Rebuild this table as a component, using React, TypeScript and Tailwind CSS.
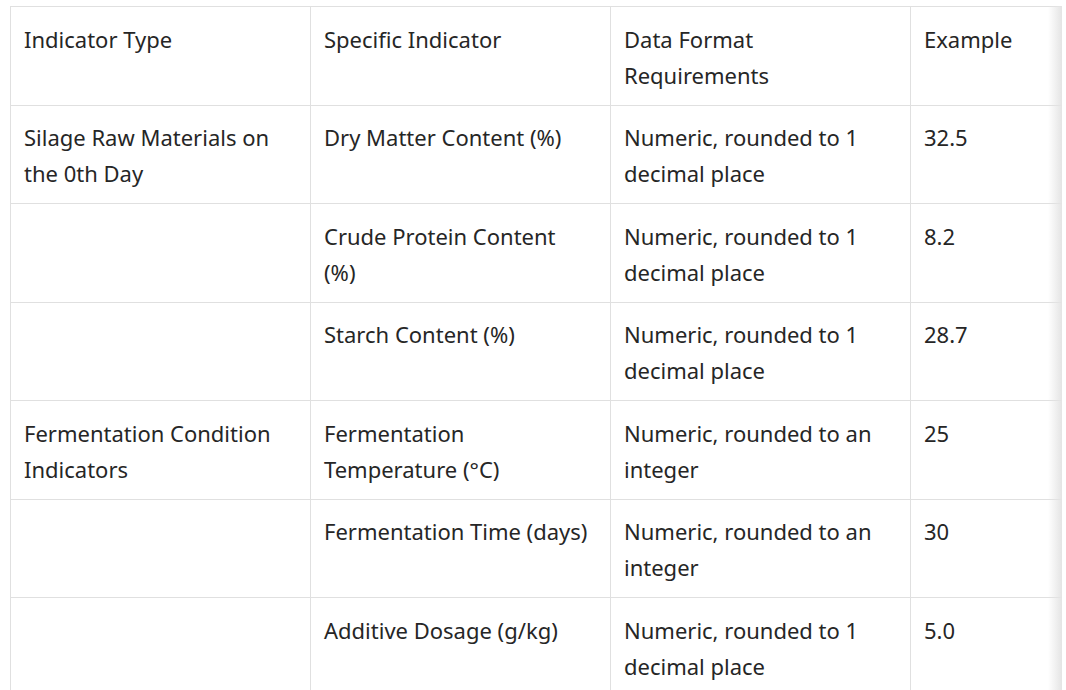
import React from 'react'

type Row = {
  type: string
  indicator: string
  format: string
  example: string
}

const rows: Row[] = [
  {
    type: 'Silage Raw Materials on the 0th Day',
    indicator: 'Dry Matter Content (%)',
    format: 'Numeric, rounded to 1 decimal place',
    example: '32.5',
  },
  {
    type: '',
    indicator: 'Crude Protein Content (%)',
    format: 'Numeric, rounded to 1 decimal place',
    example: '8.2',
  },
  {
    type: '',
    indicator: 'Starch Content (%)',
    format: 'Numeric, rounded to 1 decimal place',
    example: '28.7',
  },
  {
    type: 'Fermentation Condition Indicators',
    indicator: 'Fermentation Temperature (°C)',
    format: 'Numeric, rounded to an integer',
    example: '25',
  },
  {
    type: '',
    indicator: 'Fermentation Time (days)',
    format: 'Numeric, rounded to an integer',
    example: '30',
  },
  {
    type: '',
    indicator: 'Additive Dosage (g/kg)',
    format: 'Numeric, rounded to 1 decimal place',
    example: '5.0',
  },
]

const cell =
  'border border-[#e0e0e0] pl-[13px] pr-[20px] pt-[13.5px] pb-[12px] align-top text-left font-normal w-[300px]'

export default function App() {
  return (
    <div
      className="bg-white h-[690px] overflow-hidden pt-[6px] pl-[10px] text-[#262626] text-[22px] leading-[36px]"
      style={{ fontFamily: '"Segoe UI", "Noto Sans", "Open Sans", sans-serif' }}
    >
      <div className="relative w-[1052px] overflow-hidden">
        <table className="border-collapse table-fixed w-[1200px]">
          <thead>
            <tr>
              <th className={cell}>Indicator Type</th>
              <th className={cell}>Specific Indicator</th>
              <th className={cell}>Data Format Requirements</th>
              <th className={cell}>Example</th>
            </tr>
          </thead>
          <tbody>
            {rows.map((r, i) => (
              <tr key={i}>
                <td className={cell}>{r.type}</td>
                <td className={cell}>{r.indicator}</td>
                <td className={cell}>{r.format}</td>
                <td className={cell}>{r.example}</td>
              </tr>
            ))}
          </tbody>
        </table>
        {/* scroll fade on the right */}
        <div className="absolute top-0 right-0 bottom-0 w-[14px] bg-gradient-to-r from-transparent to-[#e4e4e4]" />
      </div>
    </div>
  )
}
